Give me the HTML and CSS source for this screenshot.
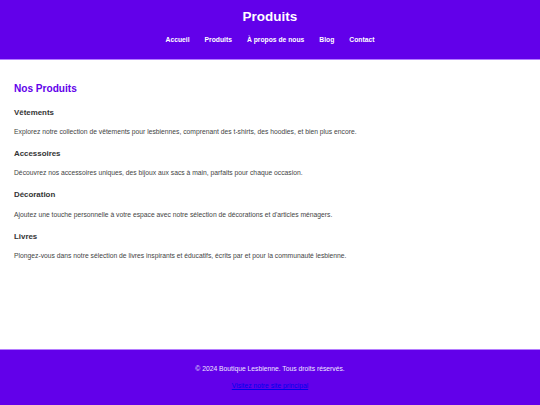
FILE: index.html
```html
<!DOCTYPE html>
<html lang="fr">
<head>
<meta charset="utf-8">
<title>Produits</title>
<link rel="stylesheet" href="styles.css">
</head>
<body>
<div class="page">
  <header class="site-header">
    <h1 class="site-title">Produits</h1>
    <nav class="site-nav">
      <a href="#">Accueil</a>
      <a href="#">Produits</a>
      <a href="#">À propos de nous</a>
      <a href="#">Blog</a>
      <a href="#">Contact</a>
    </nav>
  </header>
  <main class="content">
    <h2 class="section-title">Nos Produits</h2>
    <div class="products">
      <div class="product">
        <h3>Vêtements</h3>
        <p>Explorez notre collection de vêtements pour lesbiennes, comprenant des t-shirts, des hoodies, et bien plus encore.</p>
      </div>
      <div class="product">
        <h3>Accessoires</h3>
        <p>Découvrez nos accessoires uniques, des bijoux aux sacs à main, parfaits pour chaque occasion.</p>
      </div>
      <div class="product">
        <h3>Décoration</h3>
        <p>Ajoutez une touche personnelle à votre espace avec notre sélection de décorations et d'articles ménagers.</p>
      </div>
      <div class="product">
        <h3>Livres</h3>
        <p>Plongez-vous dans notre sélection de livres inspirants et éducatifs, écrits par et pour la communauté lesbienne.</p>
      </div>
    </div>
  </main>
  <footer class="site-footer">
    <p class="copy">© 2024 Boutique Lesbienne. Tous droits réservés.</p>
    <a class="footer-link" href="#">Visitez notre site principal</a>
  </footer>
</div>
</body>
</html>
```

FILE: styles.css
```css
html, body {
  margin: 0;
  padding: 0;
  height: 100%;
}
body {
  font-family: "Liberation Sans", Arial, sans-serif;
  background: #ffffff;
  color: #333333;
}
.page {
  min-height: 405px;
  display: flex;
  flex-direction: column;
}
.site-header {
  background: #6200ea;
  color: #ffffff;
  text-align: center;
  padding: 8px 0 14px;
  border-bottom: 1px solid #b47cff;
  display: flex;
  flex-direction: column;
  align-items: center;
  gap: 9px;
}
.site-title {
  margin: 0;
  font-size: 13.5px;
  line-height: 18px;
  font-weight: bold;
}
.site-nav {
  display: flex;
  justify-content: center;
  gap: 15px;
  line-height: 10px;
}
.site-nav a {
  color: #ffffff;
  text-decoration: none;
  font-weight: bold;
  font-size: 6.75px;
}
.content {
  flex: 1;
  padding: 22px 14px 0;
}
.section-title {
  margin: 0 0 10.5px;
  color: #6200ea;
  font-size: 10.1px;
  line-height: 14px;
}
.products {
  display: flex;
  flex-direction: column;
  gap: 10.9px;
}
.product {
  display: flex;
  flex-direction: column;
  gap: 7.5px;
}
.product h3 {
  margin: 0;
  font-size: 7.9px;
  line-height: 12px;
  color: #333333;
}
.product p {
  margin: 0;
  font-size: 6.75px;
  line-height: 11px;
  color: #444444;
}
.site-footer {
  background: #6200ea;
  border-top: 1px solid #b47cff;
  color: #f0e8ff;
  text-align: center;
  padding: 13px 0 15px;
  display: flex;
  flex-direction: column;
  align-items: center;
  gap: 6px;
  height: 27px;
}
.copy {
  margin: 0;
  font-size: 6.75px;
  line-height: 11px;
}
.footer-link {
  font-size: 6.75px;
  line-height: 11px;
  color: #0000ee;
}
```
